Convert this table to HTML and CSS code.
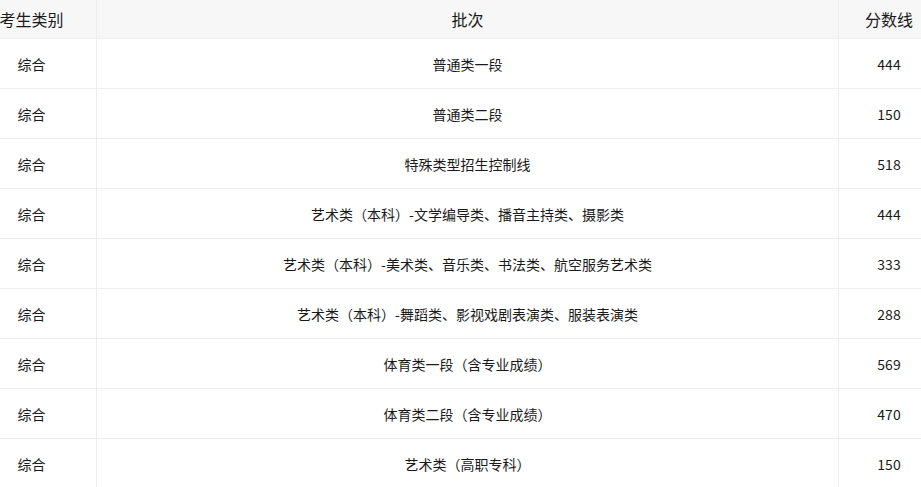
FILE: index.html
```html
<!DOCTYPE html>
<html>
<head>
<meta charset="utf-8">
<link rel="stylesheet" href="styles.css">
</head>
<body>
<div class="wrap">
<table class="score-table">
<thead>
<tr><th class="c1">考生类别</th><th class="c2">批次</th><th class="c3">分数线</th></tr>
</thead>
<tbody>
<tr><td>综合</td><td>普通类一段</td><td>444</td></tr>
<tr><td>综合</td><td>普通类二段</td><td>150</td></tr>
<tr><td>综合</td><td>特殊类型招生控制线</td><td>518</td></tr>
<tr><td>综合</td><td>艺术类（本科）-文学编导类、播音主持类、摄影类</td><td>444</td></tr>
<tr><td>综合</td><td>艺术类（本科）-美术类、音乐类、书法类、航空服务艺术类</td><td>333</td></tr>
<tr><td>综合</td><td>艺术类（本科）-舞蹈类、影视戏剧表演类、服装表演类</td><td>288</td></tr>
<tr><td>综合</td><td>体育类一段（含专业成绩）</td><td>569</td></tr>
<tr><td>综合</td><td>体育类二段（含专业成绩）</td><td>470</td></tr>
<tr><td>综合</td><td>艺术类（高职专科）</td><td>150</td></tr>
</tbody>
</table>
</div>
</body>
</html>
```
FILE: styles.css
```css
html, body {
  margin: 0;
  padding: 0;
  background: #fff;
  overflow: hidden;
}
.wrap {
  margin-left: -33px;
  width: 970px;
}
.score-table {
  width: 970px;
  border-collapse: collapse;
  table-layout: fixed;
  font-family: "Noto Sans CJK SC", "Noto Sans", sans-serif;
  color: #1a1a1a;
}
.score-table th {
  height: 38px;
  padding: 0;
  background: #f7f7f7;
  font-weight: normal;
  font-size: 16px;
  text-align: center;
  border-right: 1px solid #eee;
  border-bottom: 1px solid #eee;
}
.score-table td {
  height: 49px;
  padding: 0;
  font-size: 14px;
  text-align: center;
  border-right: 1px solid #eee;
  border-bottom: 1px solid #eee;
}
.c1 { width: 129px; }
.c2 { width: 741px; }
.c3 { width: 100px; }
```
